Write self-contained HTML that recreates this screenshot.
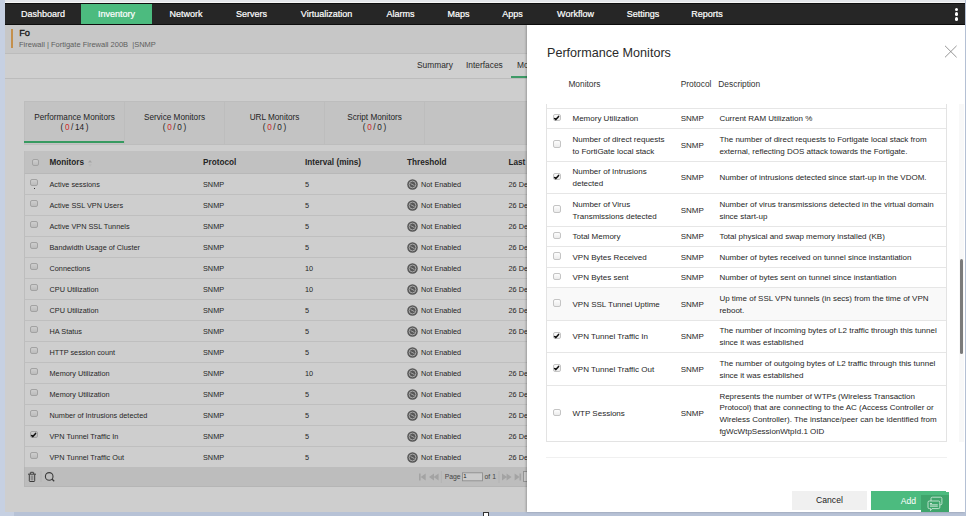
<!DOCTYPE html>
<html><head><meta charset="utf-8">
<style>
*{box-sizing:border-box;margin:0;padding:0}
html,body{width:966px;height:516px;overflow:hidden;background:#c6d0e2;font-family:"Liberation Sans",sans-serif;position:relative}
.a{position:absolute}
#top{left:5px;top:0;width:960px;height:3px;background:#e3e5e9;border-bottom:1px solid #f6f6f6}
#bot{left:14px;top:512px;width:952px;height:4px;background:#b7c2d6}
#page{left:5px;top:3px;width:960px;height:509px;background:#cecece}
#nav{left:5px;top:3px;width:960px;height:22px;background:#262626;border-top:1px solid #0e0e0e;border-bottom:1px solid #0e0e0e}
.ni{position:absolute;top:0;height:20px;line-height:20px;color:#fff;font-size:9px;-webkit-text-stroke:0.2px #fff;text-align:center;white-space:nowrap}
#inv{left:76px;top:0;width:71px;height:20px;background:#4cbb7f}
.kb{position:absolute;left:949.7px;width:3.6px;height:3.6px;border-radius:50%;background:#fff}
#hdr{left:5px;top:25px;width:960px;height:29px;background:#c7c7c7;border-bottom:1px solid #bcbcbc}
#tabrow{left:5px;top:54px;width:960px;height:25px;background:#cfcfcf;border-bottom:1px solid #bcbcbc}
.t{position:absolute;white-space:nowrap;color:#2a2a2a}
/* monitor tabs */
#mtabs{left:24px;top:101px;width:520px;height:44px;background:#c3c3c3;border:1px solid #bdbdbd;border-right:none}
.mt{position:absolute;top:0;height:43px;width:100px;border-right:1px solid #bdbdbd;text-align:center;font-size:8.2px;color:#1e1e1e;line-height:10px;padding-top:11px}
.mt b{font-weight:normal;color:#d02828}
#mtul{left:24px;top:141.3px;width:100px;height:2.2px;background:#379a60}
/* main table */
#mth{left:24px;top:151px;width:520px;height:23px;background:#c1c1c1;border-left:1px solid #bdbdbd;border-bottom:1px solid #b8b8b8}
.h{position:absolute;top:152px;height:22px;line-height:22px;font-size:8.2px;font-weight:bold;color:#252525;white-space:nowrap}
.mr{position:absolute;left:24px;width:520px;height:21px;border-bottom:1px solid #bfbfbf;border-left:1px solid #bdbdbd;font-size:7.3px;color:#262626}
.mr span{position:absolute;top:-0.3px;line-height:21px;white-space:nowrap}
.mr .c1{left:24.5px}.mr .c2{left:178px}.mr .c3{left:280px}.mr .c4{left:396px}.mr .c5{left:483.5px}
.mr .cb{position:absolute;left:5px;top:4.8px}
.cb{display:block;position:relative;width:7.5px;height:7.5px;border:1px solid #a2a2a2;border-radius:2px;background:linear-gradient(#cdcdcd,#bcbcbc)}
.ne{position:absolute;left:382px;top:4.6px}
#mfoot{left:24px;top:467px;width:520px;height:20px;background:#bdbdbd;border-left:1px solid #b5b5b5;border-bottom:1px solid #b5b5b5}
/* modal */
#modal{left:527px;top:25px;width:438px;height:487px;background:#fff;box-shadow:-1px 0 2px rgba(0,0,0,.25)}
#mtitle{left:547px;top:44.5px;font-size:12.6px;color:#2a2a2a;line-height:16px;white-space:nowrap}
.xh{position:absolute;top:78px;line-height:12px;font-size:8.4px;color:#333;white-space:nowrap}
#xtbl{left:546px;top:104px;width:401px;height:338px;border:1px solid #e3e3e3;border-top:none}
.xr{position:absolute;left:547px;width:399px;border-top:1px solid #e6e6e6;font-size:8px;color:#262626;line-height:11.7px}
.xr.hov{background:#f9f9f9}
.xr>div{position:absolute;top:1px;bottom:0;display:flex;align-items:center;white-space:nowrap}
.xc0{left:6px}.xc1{left:25.5px}.xc2{left:133.7px}.xc3{left:172.4px}
.xr .cb{position:relative;top:-1.5px;border-color:#c4c4c4;background:linear-gradient(#fdfdfd,#ececec)}
#xsep{left:546px;top:457px;width:401px;height:1px;background:#f0f0f0}
#cancel{left:792px;top:491px;width:75px;height:19px;background:#f0f0f0;font-size:8.6px;color:#222;text-align:center;line-height:19.5px}
#add{left:871px;top:490.5px;width:75px;height:19.5px;background:#4cbb7f;font-size:8.6px;color:#fff;line-height:20px;padding-left:29.8px}
#chat{left:921px;top:495px;width:28px;height:17px;background:#3fa56c}
#sbar{left:958.5px;top:104px;width:5px;height:338px;background:#f8f8f8}
#thumb{left:960px;top:259px;width:3px;height:95px;background:#7a7a7a;border-radius:1.5px}
#rline{left:965px;top:0;width:1px;height:516px;background:#b4c0d4}
</style></head><body>
<div class="a" id="top"></div>
<div class="a" id="page"></div>
<div class="a" id="bot"></div>
<div class="a" id="nav">
  <div class="a" id="inv"></div>
  <span class="ni" style="left:0;width:76px">Dashboard</span>
  <span class="ni" style="left:76px;width:71px">Inventory</span>
  <span class="ni" style="left:147px;width:68px">Network</span>
  <span class="ni" style="left:215px;width:63px">Servers</span>
  <span class="ni" style="left:278px;width:87px">Virtualization</span>
  <span class="ni" style="left:365px;width:61px">Alarms</span>
  <span class="ni" style="left:426px;width:55px">Maps</span>
  <span class="ni" style="left:481px;width:53px">Apps</span>
  <span class="ni" style="left:534px;width:73px">Workflow</span>
  <span class="ni" style="left:606px;width:64px">Settings</span>
  <span class="ni" style="left:670px;width:64px">Reports</span>
  <i class="kb" style="top:3.8px"></i><i class="kb" style="top:8.4px"></i><i class="kb" style="top:13px"></i>
</div>
<div class="a" id="hdr"></div>
<div class="a" style="left:11px;top:29px;width:2px;height:19px;background:#c4904c"></div>
<span class="t" style="left:19.3px;top:26.9px;font-size:9.3px;line-height:12px;color:#151515;-webkit-text-stroke:0.3px #151515;letter-spacing:-0.3px">Fo</span>
<span class="t" style="left:19px;top:40px;font-size:7.5px;line-height:10px;color:#5e5e5e">Firewall | Fortigate Firewall 200B &nbsp;|SNMP</span>
<div class="a" id="tabrow"></div>
<span class="t" style="left:417px;top:59px;font-size:8.4px;line-height:12px">Summary</span>
<span class="t" style="left:466px;top:59px;font-size:8.4px;line-height:12px">Interfaces</span>
<span class="t" style="left:517px;top:59px;font-size:8.4px;line-height:12px">Monitors</span>
<div class="a" style="left:511px;top:76px;width:20px;height:2px;background:#3e9a66"></div>

<div class="a" id="mtabs">
  <div class="mt" style="left:0">Performance Monitors<br>(&#8201;<b>0</b>&#8201;/&#8201;14&#8201;)</div>
  <div class="mt" style="left:100px">Service Monitors<br>(&#8201;<b>0</b>&#8201;/&#8201;0&#8201;)</div>
  <div class="mt" style="left:200px">URL Monitors<br>(&#8201;<b>0</b>&#8201;/&#8201;0&#8201;)</div>
  <div class="mt" style="left:300px">Script Monitors<br>(&#8201;<b>0</b>&#8201;/&#8201;0&#8201;)</div>
</div>
<div class="a" id="mtul"></div>

<div class="a" id="mth"></div>
<i class="a cb" style="left:31.5px;top:158.5px;width:7px;height:7px;position:absolute"></i>
<span class="h" style="left:49.5px">Monitors</span><svg class="a" style="left:87px;top:159px" width="6" height="9" viewBox="0 0 6 9"><path d="M1 3.6 L3 1 L5 3.6 Z" fill="#a5a5a5"/><path d="M1 5.2 L3 7.8 L5 5.2 Z" fill="#b9b9b9"/></svg>
<span class="h" style="left:203px">Protocol</span>
<span class="h" style="left:305px">Interval (mins)</span>
<span class="h" style="left:407px">Threshold</span>
<span class="h" style="left:508.5px">Last Poll</span>
<div class="mr" style="top:174px"><i class="cb"></i><span class="c1">Active sessions</span><span class="c2">SNMP</span><span class="c3">5</span><svg class="ne" width="11" height="11" viewBox="0 0 11 11"><circle cx="5.5" cy="5.5" r="5.3" fill="#585858"/><circle cx="5.5" cy="5.5" r="3.4" fill="none" stroke="#ababab" stroke-width="0.95"/><path d="M3.6 4.6 L7.4 6.6" stroke="#a5a5a5" stroke-width="1"/></svg><span class="c4">Not Enabled</span><span class="c5">26 De</span></div>
<div class="mr" style="top:195px"><i class="cb"></i><span class="c1">Active SSL VPN Users</span><span class="c2">SNMP</span><span class="c3">5</span><svg class="ne" width="11" height="11" viewBox="0 0 11 11"><circle cx="5.5" cy="5.5" r="5.3" fill="#585858"/><circle cx="5.5" cy="5.5" r="3.4" fill="none" stroke="#ababab" stroke-width="0.95"/><path d="M3.6 4.6 L7.4 6.6" stroke="#a5a5a5" stroke-width="1"/></svg><span class="c4">Not Enabled</span><span class="c5">26 De</span></div>
<div class="mr" style="top:216px"><i class="cb"></i><span class="c1">Active VPN SSL Tunnels</span><span class="c2">SNMP</span><span class="c3">5</span><svg class="ne" width="11" height="11" viewBox="0 0 11 11"><circle cx="5.5" cy="5.5" r="5.3" fill="#585858"/><circle cx="5.5" cy="5.5" r="3.4" fill="none" stroke="#ababab" stroke-width="0.95"/><path d="M3.6 4.6 L7.4 6.6" stroke="#a5a5a5" stroke-width="1"/></svg><span class="c4">Not Enabled</span><span class="c5">26 De</span></div>
<div class="mr" style="top:237px"><i class="cb"></i><span class="c1">Bandwidth Usage of Cluster</span><span class="c2">SNMP</span><span class="c3">5</span><svg class="ne" width="11" height="11" viewBox="0 0 11 11"><circle cx="5.5" cy="5.5" r="5.3" fill="#585858"/><circle cx="5.5" cy="5.5" r="3.4" fill="none" stroke="#ababab" stroke-width="0.95"/><path d="M3.6 4.6 L7.4 6.6" stroke="#a5a5a5" stroke-width="1"/></svg><span class="c4">Not Enabled</span><span class="c5">26 De</span></div>
<div class="mr" style="top:258px"><i class="cb"></i><span class="c1">Connections</span><span class="c2">SNMP</span><span class="c3">10</span><svg class="ne" width="11" height="11" viewBox="0 0 11 11"><circle cx="5.5" cy="5.5" r="5.3" fill="#585858"/><circle cx="5.5" cy="5.5" r="3.4" fill="none" stroke="#ababab" stroke-width="0.95"/><path d="M3.6 4.6 L7.4 6.6" stroke="#a5a5a5" stroke-width="1"/></svg><span class="c4">Not Enabled</span><span class="c5">26 De</span></div>
<div class="mr" style="top:279px"><i class="cb"></i><span class="c1">CPU Utilization</span><span class="c2">SNMP</span><span class="c3">10</span><svg class="ne" width="11" height="11" viewBox="0 0 11 11"><circle cx="5.5" cy="5.5" r="5.3" fill="#585858"/><circle cx="5.5" cy="5.5" r="3.4" fill="none" stroke="#ababab" stroke-width="0.95"/><path d="M3.6 4.6 L7.4 6.6" stroke="#a5a5a5" stroke-width="1"/></svg><span class="c4">Not Enabled</span><span class="c5">26 De</span></div>
<div class="mr" style="top:300px"><i class="cb"></i><span class="c1">CPU Utilization</span><span class="c2">SNMP</span><span class="c3">5</span><svg class="ne" width="11" height="11" viewBox="0 0 11 11"><circle cx="5.5" cy="5.5" r="5.3" fill="#585858"/><circle cx="5.5" cy="5.5" r="3.4" fill="none" stroke="#ababab" stroke-width="0.95"/><path d="M3.6 4.6 L7.4 6.6" stroke="#a5a5a5" stroke-width="1"/></svg><span class="c4">Not Enabled</span><span class="c5">26 De</span></div>
<div class="mr" style="top:321px"><i class="cb"></i><span class="c1">HA Status</span><span class="c2">SNMP</span><span class="c3">5</span><svg class="ne" width="11" height="11" viewBox="0 0 11 11"><circle cx="5.5" cy="5.5" r="5.3" fill="#585858"/><circle cx="5.5" cy="5.5" r="3.4" fill="none" stroke="#ababab" stroke-width="0.95"/><path d="M3.6 4.6 L7.4 6.6" stroke="#a5a5a5" stroke-width="1"/></svg><span class="c4">Not Enabled</span><span class="c5">26 De</span></div>
<div class="mr" style="top:342px"><i class="cb"></i><span class="c1">HTTP session count</span><span class="c2">SNMP</span><span class="c3">5</span><svg class="ne" width="11" height="11" viewBox="0 0 11 11"><circle cx="5.5" cy="5.5" r="5.3" fill="#585858"/><circle cx="5.5" cy="5.5" r="3.4" fill="none" stroke="#ababab" stroke-width="0.95"/><path d="M3.6 4.6 L7.4 6.6" stroke="#a5a5a5" stroke-width="1"/></svg><span class="c4">Not Enabled</span><span class="c5"></span></div>
<div class="mr" style="top:363px"><i class="cb"></i><span class="c1">Memory Utilization</span><span class="c2">SNMP</span><span class="c3">10</span><svg class="ne" width="11" height="11" viewBox="0 0 11 11"><circle cx="5.5" cy="5.5" r="5.3" fill="#585858"/><circle cx="5.5" cy="5.5" r="3.4" fill="none" stroke="#ababab" stroke-width="0.95"/><path d="M3.6 4.6 L7.4 6.6" stroke="#a5a5a5" stroke-width="1"/></svg><span class="c4">Not Enabled</span><span class="c5">26 De</span></div>
<div class="mr" style="top:384px"><i class="cb"></i><span class="c1">Memory Utilization</span><span class="c2">SNMP</span><span class="c3">5</span><svg class="ne" width="11" height="11" viewBox="0 0 11 11"><circle cx="5.5" cy="5.5" r="5.3" fill="#585858"/><circle cx="5.5" cy="5.5" r="3.4" fill="none" stroke="#ababab" stroke-width="0.95"/><path d="M3.6 4.6 L7.4 6.6" stroke="#a5a5a5" stroke-width="1"/></svg><span class="c4">Not Enabled</span><span class="c5">26 De</span></div>
<div class="mr" style="top:405px"><i class="cb"></i><span class="c1">Number of Intrusions detected</span><span class="c2">SNMP</span><span class="c3">5</span><svg class="ne" width="11" height="11" viewBox="0 0 11 11"><circle cx="5.5" cy="5.5" r="5.3" fill="#585858"/><circle cx="5.5" cy="5.5" r="3.4" fill="none" stroke="#ababab" stroke-width="0.95"/><path d="M3.6 4.6 L7.4 6.6" stroke="#a5a5a5" stroke-width="1"/></svg><span class="c4">Not Enabled</span><span class="c5">26 De</span></div>
<div class="mr" style="top:426px"><i class="cb"><svg width="9" height="9" viewBox="0 0 9 9" style="position:absolute;left:-1px;top:-1px"><path d="M1.6 4.5 L2.9 5.6 L5.6 2.4" stroke="#111" stroke-width="1.5" fill="none" stroke-linecap="round" stroke-linejoin="round"/></svg></i><span class="c1">VPN Tunnel Traffic In</span><span class="c2">SNMP</span><span class="c3">5</span><svg class="ne" width="11" height="11" viewBox="0 0 11 11"><circle cx="5.5" cy="5.5" r="5.3" fill="#585858"/><circle cx="5.5" cy="5.5" r="3.4" fill="none" stroke="#ababab" stroke-width="0.95"/><path d="M3.6 4.6 L7.4 6.6" stroke="#a5a5a5" stroke-width="1"/></svg><span class="c4">Not Enabled</span><span class="c5">26 De</span></div>
<div class="mr" style="top:447px"><i class="cb"></i><span class="c1">VPN Tunnel Traffic Out</span><span class="c2">SNMP</span><span class="c3">5</span><svg class="ne" width="11" height="11" viewBox="0 0 11 11"><circle cx="5.5" cy="5.5" r="5.3" fill="#585858"/><circle cx="5.5" cy="5.5" r="3.4" fill="none" stroke="#ababab" stroke-width="0.95"/><path d="M3.6 4.6 L7.4 6.6" stroke="#a5a5a5" stroke-width="1"/></svg><span class="c4">Not Enabled</span><span class="c5">26 De</span></div>
<div class="a" id="mfoot"></div>
<div class="a" style="left:33.6px;top:187.6px;width:1.6px;height:1.6px;border-radius:50%;background:#000"></div>
<svg class="a" style="left:24px;top:467px" width="40" height="20" viewBox="0 0 40 20">
 <g fill="none" stroke="#3c3c3c" stroke-width="1">
  <path d="M4 7.2 H12"/>
  <path d="M6.3 7 V5.7 Q6.3 5.3 6.8 5.3 H9.2 Q9.7 5.3 9.7 5.7 V7"/>
  <path d="M5.3 7.5 V13.8 Q5.3 14.5 6 14.5 H10 Q10.7 14.5 10.7 13.8 V7.5"/>
 </g>
 <g stroke="#777" stroke-width="0.7"><path d="M7.2 8.5 V13.3 M8 8.5 V13.3 M8.8 8.5 V13.3"/></g>
 <path d="M17 4 V15" stroke="#b3b3b3" stroke-width="1"/>
 <circle cx="25.2" cy="9.4" r="3.8" fill="none" stroke="#3c3c3c" stroke-width="1.1"/>
 <path d="M27.9 12.1 L30.2 14.2" stroke="#3c3c3c" stroke-width="1.3"/>
</svg>
<svg class="a" style="left:412px;top:467px" width="115" height="20" viewBox="0 0 115 20">
 <g fill="#a3a3a3">
  <rect x="7" y="6.5" width="1.6" height="7"/>
  <path d="M13.7 6.5 V13.5 L8.7 10 Z"/>
  <path d="M22 6.5 V13.5 L17 10 Z M26.6 6.5 V13.5 L21.6 10 Z"/>
  <path d="M90 6.5 V13.5 L95 10 Z M94.6 6.5 V13.5 L99.6 10 Z"/>
  <path d="M102.6 6.5 V13.5 L107.6 10 Z"/>
  <rect x="107.5" y="6.5" width="1.6" height="7"/>
 </g>
 <path d="M29.3 4 V16 M87 4 V16" stroke="#b3b3b3" stroke-width="1"/>
 <rect x="50.5" y="5.8" width="20" height="8" fill="#cbcbcb" stroke="#8f8f8f" stroke-width="0.9"/>
 <rect x="111.5" y="4.5" width="10" height="10" fill="#cbcbcb" stroke="#8f8f8f" stroke-width="0.9"/>
</svg>
<span class="t" style="left:444.7px;top:471.5px;font-size:6.8px;line-height:10px;color:#444">Page</span>
<span class="t" style="left:463.3px;top:472.5px;font-size:6px;line-height:7px;color:#222">1</span>
<span class="t" style="left:484.6px;top:471.5px;font-size:6.8px;line-height:10px;color:#444">of 1</span>

<div class="a" id="modal"></div>
<svg class="a" style="left:944px;top:44.5px" width="14" height="13" viewBox="0 0 14 13"><path d="M1 0.8 L12.6 12.3 M12.6 0.8 L1 12.3" stroke="#8a8a8a" stroke-width="0.9"/></svg>
<div class="a" id="mtitle">Performance Monitors</div>
<span class="xh" style="left:568.4px">Monitors</span>
<span class="xh" style="left:680.7px">Protocol</span>
<span class="xh" style="left:718.3px">Description</span>
<div class="a" id="xtbl"></div>
<div class="xr" style="top:108px;height:20px"><div class="xc0"><i class="cb"><svg width="9" height="9" viewBox="0 0 9 9" style="position:absolute;left:-1px;top:-1px"><path d="M1.6 4.5 L2.9 5.6 L5.6 2.4" stroke="#111" stroke-width="1.5" fill="none" stroke-linecap="round" stroke-linejoin="round"/></svg></i></div><div class="xc1">Memory Utilization</div><div class="xc2">SNMP</div><div class="xc3">Current RAM Utilization %</div></div>
<div class="xr" style="top:128px;height:33px"><div class="xc0"><i class="cb"></i></div><div class="xc1">Number of direct requests<br>to FortiGate local stack</div><div class="xc2">SNMP</div><div class="xc3">The number of direct requests to Fortigate local stack from<br>external, reflecting DOS attack towards the Fortigate.</div></div>
<div class="xr" style="top:161px;height:32px"><div class="xc0"><i class="cb"><svg width="9" height="9" viewBox="0 0 9 9" style="position:absolute;left:-1px;top:-1px"><path d="M1.6 4.5 L2.9 5.6 L5.6 2.4" stroke="#111" stroke-width="1.5" fill="none" stroke-linecap="round" stroke-linejoin="round"/></svg></i></div><div class="xc1">Number of Intrusions<br>detected</div><div class="xc2">SNMP</div><div class="xc3">Number of intrusions detected since start-up in the VDOM.</div></div>
<div class="xr" style="top:193px;height:33px"><div class="xc0"><i class="cb"></i></div><div class="xc1">Number of Virus<br>Transmissions detected</div><div class="xc2">SNMP</div><div class="xc3">Number of virus transmissions detected in the virtual domain<br>since start-up</div></div>
<div class="xr" style="top:226px;height:20px"><div class="xc0"><i class="cb"></i></div><div class="xc1">Total Memory</div><div class="xc2">SNMP</div><div class="xc3">Total physical and swap memory installed (KB)</div></div>
<div class="xr" style="top:246px;height:21px"><div class="xc0"><i class="cb"></i></div><div class="xc1">VPN Bytes Received</div><div class="xc2">SNMP</div><div class="xc3">Number of bytes received on tunnel since instantiation</div></div>
<div class="xr" style="top:267px;height:20px"><div class="xc0"><i class="cb"></i></div><div class="xc1">VPN Bytes sent</div><div class="xc2">SNMP</div><div class="xc3">Number of bytes sent on tunnel since instantiation</div></div>
<div class="xr hov" style="top:287px;height:33px"><div class="xc0"><i class="cb"></i></div><div class="xc1">VPN SSL Tunnel Uptime</div><div class="xc2">SNMP</div><div class="xc3">Up time of SSL VPN tunnels (in secs) from the time of VPN<br>reboot.</div></div>
<div class="xr" style="top:320px;height:32px"><div class="xc0"><i class="cb"><svg width="9" height="9" viewBox="0 0 9 9" style="position:absolute;left:-1px;top:-1px"><path d="M1.6 4.5 L2.9 5.6 L5.6 2.4" stroke="#111" stroke-width="1.5" fill="none" stroke-linecap="round" stroke-linejoin="round"/></svg></i></div><div class="xc1">VPN Tunnel Traffic In</div><div class="xc2">SNMP</div><div class="xc3">The number of incoming bytes of L2 traffic through this tunnel<br>since it was established</div></div>
<div class="xr" style="top:352px;height:33px"><div class="xc0"><i class="cb"><svg width="9" height="9" viewBox="0 0 9 9" style="position:absolute;left:-1px;top:-1px"><path d="M1.6 4.5 L2.9 5.6 L5.6 2.4" stroke="#111" stroke-width="1.5" fill="none" stroke-linecap="round" stroke-linejoin="round"/></svg></i></div><div class="xc1">VPN Tunnel Traffic Out</div><div class="xc2">SNMP</div><div class="xc3">The number of outgoing bytes of L2 traffic through this tunnel<br>since it was established</div></div>
<div class="xr" style="top:385px;height:56px"><div class="xc0"><i class="cb"></i></div><div class="xc1">WTP Sessions</div><div class="xc2">SNMP</div><div class="xc3">Represents the number of WTPs (Wireless Transaction<br>Protocol) that are connecting to the AC (Access Controller or<br>Wireless Controller). The instance/peer can be identified from<br>fgWcWtpSessionWtpId.1 OID</div></div>
<div class="a" id="xsep"></div>
<div class="a" id="cancel">Cancel</div>
<div class="a" id="add">Add</div>
<div class="a" id="chat"></div>
<svg class="a" style="left:921px;top:492px" width="28" height="20" viewBox="0 0 28 20">
 <rect x="25" y="0" width="3" height="3" fill="#4cbb7f"/>
 <g fill="none" stroke="#d9efe2" stroke-width="0.8">
  <path d="M10 9 V6.5 Q10 5.2 11.3 5.2 H19.6 Q20.9 5.2 20.9 6.5 V11.5 Q20.9 12.8 19.6 12.8 H18.8"/>
  <path d="M8.3 9 H17.5 Q18.8 9 18.8 10.3 V15.3 Q18.8 16.6 17.5 16.6 H11 L9.5 18.6 L9.6 16.6 H8.3 Q7 16.6 7 15.3 V10.3 Q7 9 8.3 9 Z"/>
 </g>
 <path d="M9 11.5 H11 M9 12.8 H16.8 M9 14.2 H16.8" stroke="#cfe9d9" stroke-width="0.9"/>
</svg>
<div class="a" id="sbar"></div>
<div class="a" id="thumb"></div>
<div class="a" id="rline"></div>
<div class="a" style="left:483px;top:512px;width:5.5px;height:5px;background:#fff;border:1px solid #333"></div>
</body></html>
